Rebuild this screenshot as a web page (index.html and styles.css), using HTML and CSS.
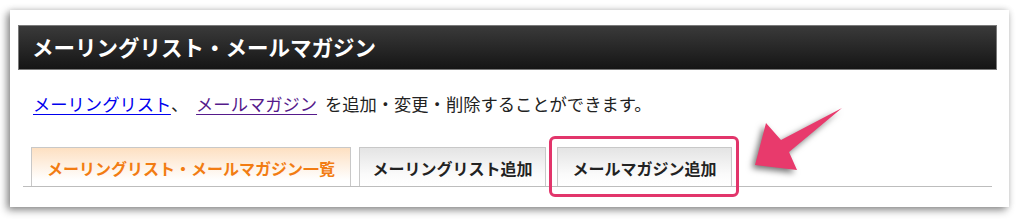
FILE: index.html
```html
<!DOCTYPE html>
<html lang="ja">
<head>
<meta charset="utf-8">
<link rel="stylesheet" href="styles.css">
</head>
<body>
<div class="card">
  <h1 class="title">メーリングリスト・メールマガジン</h1>
  <p class="desc"><a href="#" class="link">メーリングリスト</a>、 <a href="#" class="link visited">メールマガジン</a> を追加・変更・削除することができます。</p>
  <div class="tabs">
    <div class="tab active">メーリングリスト・メールマガジン一覧</div>
    <div class="tab t2">メーリングリスト追加</div>
    <div class="tab t3">メールマガジン追加</div>
  </div>
  <div class="highlight"></div>
  <svg class="arrow" width="120" height="90" viewBox="740 95 120 90">
    <polygon points="755,165 766,123 781,140 842,108 789,152 797,170" fill="#e83a6c"/>
  </svg>
</div>
</body>
</html>
```
FILE: styles.css
```css
html, body {
  margin: 0;
  padding: 0;
  background: #fff;
}
body {
  font-family: "Noto Sans CJK JP", "Noto Sans", sans-serif;
  width: 1020px;
  height: 219px;
  overflow: hidden;
}
.card {
  position: relative;
  margin: 10px 0 0 10px;
  width: 999px;
  height: 197px;
  box-sizing: border-box;
  padding: 15px 12px 0 8px;
  background: #fff;
  box-shadow: -3px 3px 8px rgba(0,0,0,0.45), 0 0 6px rgba(0,0,0,0.12);
}
.title {
  margin: 0;
  height: 45px;
  box-sizing: border-box;
  border: 1px solid #7a7a7a;
  background: linear-gradient(#3a3a3a, #151515);
  color: #fff;
  font-size: 21.5px;
  font-weight: bold;
  line-height: 42px;
  padding-left: 13px;
  letter-spacing: 0;
}
.desc {
  margin: 22px 0 0 15px;
  font-size: 17.3px;
  line-height: 24px;
  color: #222;
  word-spacing: 4px;
}
.link {
  color: #0000ee;
  text-decoration: underline;
  text-underline-offset: 3px;
}
.link.visited {
  color: #551a8b;
}
.tabs {
  display: flex;
  align-items: flex-end;
  margin: 31px 5px 0 5px;
  padding-left: 8px;
  border-bottom: 1px solid #bdbdbd;
  height: 39px;
}
.tab {
  height: 39px;
  box-sizing: border-box;
  border: 1px solid #c8c8c8;
  border-bottom: none;
  background: linear-gradient(#e4e4e4, #fbfbfb 70%, #fff);
  color: #222;
  font-size: 16px;
  font-weight: bold;
  line-height: 40px;
  white-space: nowrap;
}
.tab.active {
  background: linear-gradient(#fde0c2, #fff 85%);
  color: #f27c12;
  width: 320px;
  text-align: center;
}
.tab.t2 {
  margin-left: 8px;
  width: 187px;
  text-align: center;
}
.tab.t3 {
  margin-left: 11px;
  width: 175px;
  text-align: center;
}
.highlight {
  position: absolute;
  left: 539px;
  top: 126px;
  width: 190px;
  height: 61px;
  box-sizing: border-box;
  border: 3px solid #e2356b;
  border-radius: 6px;
}
.arrow {
  position: absolute;
  left: 730px;
  top: 85px;
  filter: drop-shadow(-3px 3px 3px rgba(0,0,0,0.55));
}
```
